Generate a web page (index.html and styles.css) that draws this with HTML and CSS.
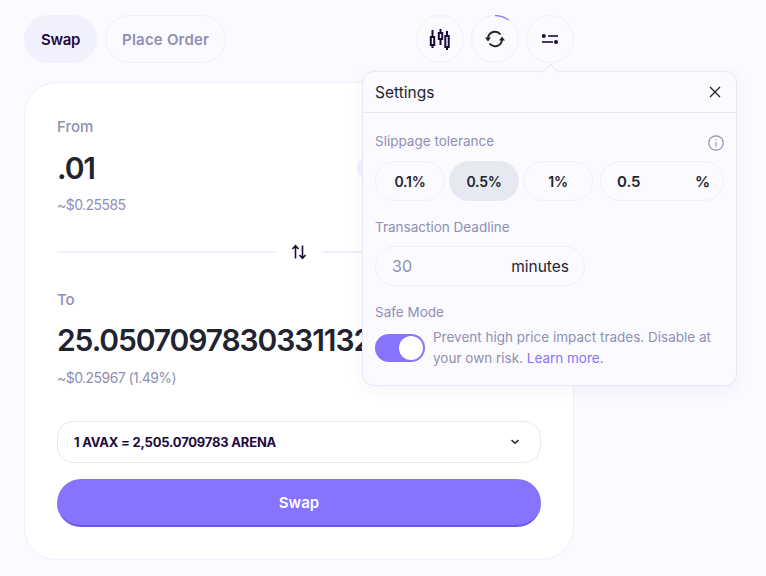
FILE: index.html
```html
<!DOCTYPE html>
<html lang="en">
<head>
    <meta charset="UTF-8">
    <meta name="viewport" content="width=device-width, initial-scale=1.0">
    <title>Swap</title>
    <link rel="stylesheet" href="styles.css">
</head>
<body>
    <div class="page">
        <div class="topbar">
            <div class="tabs">
                <button class="tab tab-active">Swap</button>
                <button class="tab">Place Order</button>
            </div>
            <div class="tools">
                <button class="tool">
                    <svg width="24" height="24" viewBox="0 0 24 24" fill="none" stroke="#1d0a3d" stroke-width="2">
                        <path d="M4.500 3v7M4.500 18v3M12.500 2v4M12.500 12v6M19 4v5M19 20v3"/>
                        <rect x="2.800" y="10" width="3.400" height="8"/>
                        <rect x="10.800" y="6" width="3.400" height="6"/>
                        <rect x="17.300" y="9" width="3.400" height="11"/>
                    </svg>
                </button>
                <button class="tool tool-refresh">
                    <svg width="20" height="18" viewBox="0 0 20 18" fill="none">
                        <path d="M3 8A7 7 0 0 1 15.500 4.500M17 10A7 7 0 0 1 4.500 13.500" stroke="#1f2430" stroke-width="2"/>
                        <path d="M0 7.500h6L3 11.500zM14 10.500h6L17 6.500z" fill="#1f2430"/>
                    </svg>
                    <svg class="progress" width="48" height="48" viewBox="0 0 48 48" fill="none">
                        <path d="M24 0.700A23.300 23.300 0 0 1 37.500 5" stroke="#8674ff" stroke-width="1.300"/>
                    </svg>
                </button>
                <button class="tool">
                    <svg width="18" height="14" viewBox="0 0 18 14" fill="#1d0a3d">
                        <circle cx="2.800" cy="4" r="2"/>
                        <rect x="7" y="3.200" width="10" height="1.600"/>
                        <rect x="1" y="9.200" width="11" height="1.600"/>
                        <circle cx="15" cy="10" r="2"/>
                    </svg>
                </button>
            </div>
        </div>

        <div class="card">
            <div class="label">From</div>
            <div class="amount-row">
                <div class="amount">.01</div>
                <div class="token-pill"></div>
            </div>
            <div class="usd">~$0.25585</div>

            <div class="divider">
                <svg width="16" height="16" viewBox="0 0 16 16" fill="none" stroke="#1d0a3d" stroke-width="1.600">
                    <path d="M4.500 14.500V2M1.500 5l3-3.300 3 3.300M11.500 1.500V14M8.500 11l3 3.300 3-3.300"/>
                </svg>
            </div>

            <div class="label">To</div>
            <div class="amount-row amount-row-to">
                <div class="amount">25.0507097830331132</div>
            </div>
            <div class="usd usd-to">~$0.25967 (1.49%)</div>

            <div class="rate">
                <span>1 AVAX = 2,505.0709783 ARENA</span>
                <svg width="10" height="6" viewBox="0 0 10 6" fill="none" stroke="#1f2430" stroke-width="1.500">
                    <path d="M1.500 1l3.500 3.200L8.500 1"/>
                </svg>
            </div>
            <button class="swap-btn">Swap</button>
        </div>

        <div class="settings">
            <div class="settings-head">
                <span>Settings</span>
                <svg width="12" height="12" viewBox="0 0 12 12" fill="none" stroke="#1f2430" stroke-width="1.300">
                    <path d="M1 1l10 10M11 1L1 11"/>
                </svg>
            </div>
            <div class="settings-body">
                <div class="setting-title slip-title">
                    <span>Slippage tolerance</span>
                    <svg width="16" height="16" viewBox="0 0 16 16" fill="none" stroke="#8f8fb3" stroke-width="1.200">
                        <circle cx="8" cy="8" r="7.200"/>
                        <path d="M8 7v4.500M8 4.200v1.400"/>
                    </svg>
                </div>
                <div class="slip-row">
                    <div class="slip">0.1%</div>
                    <div class="slip slip-active">0.5%</div>
                    <div class="slip">1%</div>
                    <div class="slip slip-input"><span>0.5</span><span>%</span></div>
                </div>
                <div class="setting-title">Transaction Deadline</div>
                <div class="deadline"><span class="deadline-val">30</span><span>minutes</span></div>
                <div class="setting-title">Safe Mode</div>
                <div class="safe-row">
                    <div class="toggle"><div class="knob"></div></div>
                    <p><span>Prevent high price impact trades. Disable at your own risk.</span> <a href="#">Learn more.</a></p>
                </div>
            </div>
        </div>
    </div>
</body>
</html>
```

FILE: styles.css
```css
* {
    box-sizing: border-box;
}
html, body {
    height: 100%;
}
body {
    margin: 0;
    background: #fafaff;
    font-family: 'Inter', 'Liberation Sans', sans-serif;
    color: #1f2430;
    overflow: hidden;
}
button {
    font-family: inherit;
}
.page {
    position: relative;
    width: 766px;
    padding: 15px 0 0 24px;
}
.topbar {
    display: flex;
    justify-content: space-between;
    width: 550px;
    height: 48px;
}
.tabs, .tools {
    display: flex;
}
.tabs {
    gap: 8px;
}
.tools {
    gap: 7px;
}
.tab {
    height: 48px;
    padding: 0 16px;
    border: 1px solid #f0eefc;
    border-radius: 24px;
    background: transparent;
    color: #8f8fb3;
    font-size: 15px;
    font-weight: 600;
    letter-spacing: 0.2px;
}
.tab-active {
    background: #f1f0fd;
    border-color: #f1f0fd;
    color: #1d0a3d;
    letter-spacing: -0.3px;
}
.tool {
    position: relative;
    display: flex;
    align-items: center;
    justify-content: center;
    width: 48px;
    height: 48px;
    padding: 0;
    border: 1px solid #f0eefc;
    border-radius: 50%;
    background: transparent;
}
.progress {
    position: absolute;
    top: -1px;
    left: -1px;
}
.card {
    width: 550px;
    height: 478px;
    margin-top: 19px;
    padding: 34px 32px 0;
    background: #fff;
    border: 1px solid #f0eefc;
    border-radius: 32px;
}
.label {
    font-size: 15px;
    line-height: 20px;
    font-weight: 500;
    color: #8f8fb3;
}
.amount-row {
    display: flex;
    justify-content: space-between;
    align-items: center;
    height: 40px;
    margin-top: 11px;
    overflow: hidden;
}
.amount-row-to {
    margin-top: 10px;
}
.amount {
    font-size: 30px;
    font-weight: 600;
    letter-spacing: -1.1px;
    white-space: nowrap;
}
.token-pill {
    width: 100px;
    height: 24px;
    margin-right: 84px;
    border-radius: 12px;
    background: #f1f0fd;
    flex-shrink: 0;
}
.usd {
    margin-top: 7px;
    font-size: 14px;
    line-height: 20px;
    color: #8f8fb3;
    letter-spacing: -0.55px;
}
.usd-to {
    margin-top: 8px;
}
.divider {
    display: flex;
    align-items: center;
    justify-content: center;
    position: relative;
    height: 16px;
    margin: 29px 0 30px;
    background: linear-gradient(#f0eefc, #f0eefc) center / 100% 2px no-repeat;
}
.divider svg {
    box-sizing: content-box;
    padding: 0 16px;
    background: #fff;
}
.rate {
    display: flex;
    align-items: center;
    justify-content: space-between;
    height: 42px;
    margin-top: 33px;
    padding: 0 20px 0 16px;
    border: 1px solid #e6e9f4;
    border-radius: 16px;
    font-size: 13px;
    font-weight: 700;
    color: #1d0a3d;
    letter-spacing: -0.2px;
}
.swap-btn {
    display: block;
    width: 100%;
    height: 48px;
    margin-top: 16px;
    border: none;
    border-bottom: 2px solid #6a55e8;
    border-radius: 24px;
    background: #8674ff;
    color: #fff;
    font-size: 15px;
    font-weight: 600;
}
.settings {
    position: absolute;
    top: 71px;
    left: 362px;
    width: 375px;
    height: 315px;
    background: #fbfaff;
    border: 1px solid #e6e9f4;
    border-radius: 12px;
    box-shadow: 0 4px 16px rgba(60, 60, 120, 0.05);
}
.settings::before {
    content: "";
    position: absolute;
    top: -6px;
    left: 182px;
    width: 10px;
    height: 10px;
    background: #fbfaff;
    border-top: 1px solid #e6e9f4;
    border-left: 1px solid #e6e9f4;
    transform: rotate(45deg);
}
.settings-head {
    display: flex;
    align-items: center;
    justify-content: space-between;
    height: 41px;
    padding: 0 15px 0 12px;
    border-bottom: 1px solid #e6e9f4;
    font-size: 15.500px;
    font-weight: 400;
}
.settings-body {
    padding: 0 12px;
}
.setting-title {
    font-size: 13.500px;
    line-height: 18px;
    color: #8f8fb3;
}
.slip-title {
    display: flex;
    align-items: center;
    justify-content: space-between;
    padding-top: 19px;
    height: 37px;
}
.slip-title svg {
    margin-top: 3px;
}
.slip-row {
    display: flex;
    gap: 4px;
    margin: 11px 0 17px;
}
.slip {
    display: flex;
    align-items: center;
    justify-content: center;
    width: 70px;
    height: 40px;
    border: 1px solid #f0eefc;
    border-radius: 20px;
    font-size: 14px;
    font-weight: 600;
    letter-spacing: -0.3px;
}
.slip-active {
    background: #e6e9f2;
    border-color: #e6e9f2;
}
.slip-input {
    width: 124px;
    margin-left: 3px;
    justify-content: space-between;
    padding: 0 13px 0 16px;
    font-size: 15px;
    letter-spacing: 0;
}
.deadline {
    display: flex;
    align-items: center;
    justify-content: space-between;
    width: 210px;
    height: 40px;
    margin: 10px 0 17px;
    padding: 0 15px 0 16px;
    border: 1px solid #f0eefc;
    border-radius: 20px;
    font-size: 15.500px;
}
.deadline-val {
    color: #8f8fb3;
    font-size: 16px;
}
.safe-row {
    display: flex;
    gap: 8px;
    margin-top: 6px;
}
.toggle {
    display: flex;
    justify-content: flex-end;
    align-items: center;
    width: 50px;
    height: 28px;
    margin-top: 7px;
    padding: 2px;
    border-radius: 14px;
    background: #8674ff;
    flex-shrink: 0;
}
.knob {
    width: 24px;
    height: 24px;
    border-radius: 50%;
    background: #fff;
}
.safe-row p {
    margin: 0;
    font-size: 13.500px;
    line-height: 21px;
    color: #8f8fb3;
}
.safe-row a {
    color: #8674ff;
    text-decoration: none;
}
```
